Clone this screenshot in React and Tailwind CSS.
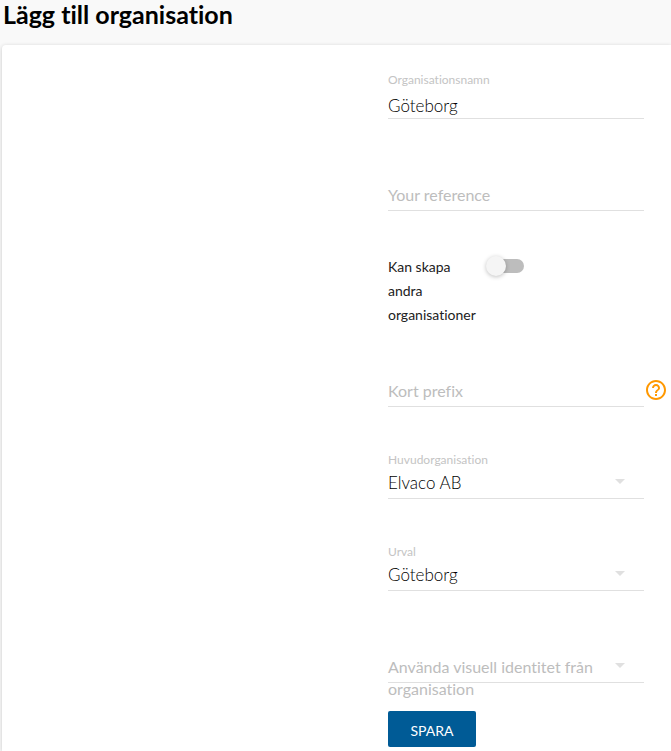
import { useId, useState } from 'react';

function FieldLabel({ htmlFor, floating, children }) {
  return floating ? (
    <label htmlFor={htmlFor} className="mt-[17px] block h-4 text-[12px] leading-4 text-[#c4c4c4]">
      {children}
    </label>
  ) : (
    <>
      <div className="h-[33px]" />
      <label
        htmlFor={htmlFor}
        className="pointer-events-none absolute top-[37px] left-0 w-56 text-[16px] leading-[22px] text-[#bdbdbd]"
      >
        {children}
      </label>
    </>
  );
}

function TextField({ label, initial = '' }) {
  const id = useId();
  const [value, setValue] = useState(initial);
  return (
    <div className="relative h-[72px] w-64">
      <FieldLabel htmlFor={id} floating={value !== ''}>
        {label}
      </FieldLabel>
      <input
        id={id}
        type="text"
        value={value}
        onChange={(e) => setValue(e.target.value)}
        className="block h-[31px] w-full border-b border-[#e0e0e0] bg-transparent pt-1 text-[17px] font-light text-black outline-none"
      />
    </div>
  );
}

function SelectField({ label, initial = '' }) {
  const id = useId();
  const [value, setValue] = useState(initial);
  return (
    <div className="relative h-[72px] w-64">
      <FieldLabel htmlFor={id} floating={value !== ''}>
        {label}
      </FieldLabel>
      <select
        id={id}
        value={value}
        onChange={(e) => setValue(e.target.value)}
        className="block h-[31px] w-full appearance-none border-b border-[#e0e0e0] bg-transparent text-[17px] font-light text-black outline-none"
      >
        <option value="" />
        {initial && <option value={initial}>{initial}</option>}
      </select>
      <svg viewBox="0 0 10 5" className="pointer-events-none absolute top-11 right-[19px] h-[5px] w-2.5 fill-[#e0e0e0]" aria-hidden="true">
        <path d="M0 0h10L5 5z" />
      </svg>
    </div>
  );
}

export default function App() {
  return (
    <div className="flex min-h-screen flex-col bg-[#f9f9f9] font-[Lato,sans-serif] text-black [font-variant-ligatures:none]">
      <h1 className="pl-[3px] text-[25px] leading-7 font-bold">Lägg till organisation</h1>
      <main className="mt-[17px] ml-0.5 flex flex-1 justify-end rounded-tl-[4px] bg-white pt-2.5 pr-[3px] pb-1 shadow-[0_1px_4px_rgba(0,0,0,0.2)]">
        <form className="flex w-[280px] flex-col items-start gap-5" onSubmit={(e) => e.preventDefault()}>
          <TextField label="Organisationsnamn" initial="Göteborg" />
          <TextField label="Your reference" />
          <div className="mt-4 -mb-1 flex items-start">
            <label htmlFor="can-create" className="w-[100px] text-[14px] leading-6 text-[#212121]">
              Kan skapa andra organisationer
            </label>
            <input
              id="can-create"
              type="checkbox"
              role="switch"
              className="relative mt-1 h-3.5 w-9 appearance-none rounded-full bg-[#bdbdbd] before:absolute before:-top-[3px] before:-left-0.5 before:size-5 before:rounded-full before:bg-[#f5f5f5] before:shadow-[0_1px_4px_rgba(0,0,0,0.25)] checked:before:left-[18px]"
            />
          </div>
          <div className="flex items-start">
            <TextField label="Kort prefix" />
            <button type="button" aria-label="Hjälp" className="mt-[35px] size-6">
              <svg viewBox="0 0 24 24" className="size-6 fill-[#ff9800]" aria-hidden="true">
                <path d="M11 18h2v-2h-2v2zm1-16C6.480 2 2 6.480 2 12s4.480 10 10 10 10-4.480 10-10S17.520 2 12 2zm0 18c-4.410 0-8-3.590-8-8s3.590-8 8-8 8 3.590 8 8-3.590 8-8 8zm0-14c-2.210 0-4 1.790-4 4h2c0-1.100.9-2 2-2s2 .9 2 2c0 2-3 1.750-3 5h2c0-2.250 3-2.500 3-5 0-2.210-1.790-4-4-4z" />
              </svg>
            </button>
          </div>
          <SelectField label="Huvudorganisation" initial="Elvaco AB" />
          <SelectField label="Urval" initial="Göteborg" />
          <SelectField label="Använda visuell identitet från organisation" />
          <button type="submit" className="h-9 w-[88px] rounded-[2px] bg-[#005b96] pt-0.5 text-[14px] text-white">
            SPARA
          </button>
        </form>
      </main>
    </div>
  );
}
